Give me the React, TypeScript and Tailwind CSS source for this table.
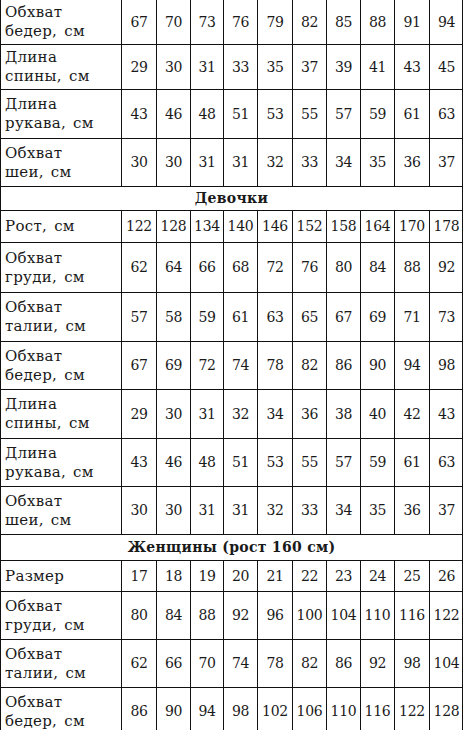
import React from "react";

type Row =
  | { kind: "data"; h: number; label: string[]; values: number[] }
  | { kind: "head"; h: number; title: string };

const rows: Row[] = [
  { kind: "data", h: 45, label: ["Обхват", "бедер, см"], values: [67, 70, 73, 76, 79, 82, 85, 88, 91, 94] },
  { kind: "data", h: 45, label: ["Длина", "спины, см"], values: [29, 30, 31, 33, 35, 37, 39, 41, 43, 45] },
  { kind: "data", h: 49, label: ["Длина", "рукава, см"], values: [43, 46, 48, 51, 53, 55, 57, 59, 61, 63] },
  { kind: "data", h: 48, label: ["Обхват", "шеи, см"], values: [30, 30, 31, 31, 32, 33, 34, 35, 36, 37] },
  { kind: "head", h: 24, title: "Девочки" },
  { kind: "data", h: 32, label: ["Рост, см"], values: [122, 128, 134, 140, 146, 152, 158, 164, 170, 178] },
  { kind: "data", h: 50, label: ["Обхват", "груди, см"], values: [62, 64, 66, 68, 72, 76, 80, 84, 88, 92] },
  { kind: "data", h: 49, label: ["Обхват", "талии, см"], values: [57, 58, 59, 61, 63, 65, 67, 69, 71, 73] },
  { kind: "data", h: 48, label: ["Обхват", "бедер, см"], values: [67, 69, 72, 74, 78, 82, 86, 90, 94, 98] },
  { kind: "data", h: 49, label: ["Длина", "спины, см"], values: [29, 30, 31, 32, 34, 36, 38, 40, 42, 43] },
  { kind: "data", h: 48, label: ["Длина", "рукава, см"], values: [43, 46, 48, 51, 53, 55, 57, 59, 61, 63] },
  { kind: "data", h: 48, label: ["Обхват", "шеи, см"], values: [30, 30, 31, 31, 32, 33, 34, 35, 36, 37] },
  { kind: "head", h: 26, title: "Женщины (рост 160 см)" },
  { kind: "data", h: 31, label: ["Размер"], values: [17, 18, 19, 20, 21, 22, 23, 24, 25, 26] },
  { kind: "data", h: 48, label: ["Обхват", "груди, см"], values: [80, 84, 88, 92, 96, 100, 104, 110, 116, 122] },
  { kind: "data", h: 48, label: ["Обхват", "талии, см"], values: [62, 66, 70, 74, 78, 82, 86, 92, 98, 104] },
  { kind: "data", h: 48, label: ["Обхват", "бедер, см"], values: [86, 90, 94, 98, 102, 106, 110, 116, 122, 128] },
];

const heights: Record<number, string> = {
  24: "h-[24px]",
  26: "h-[26px]",
  31: "h-[31px]",
  32: "h-[32px]",
  45: "h-[45px]",
  48: "h-[48px]",
  49: "h-[49px]",
  50: "h-[50px]",
};

export default function App() {
  return (
    <div className="w-[463px] h-[730px] overflow-hidden bg-white text-[#1a1a1a] font-['DejaVu_Serif',serif]">
      <div className="w-[463px] border-l border-r border-[#111]">
        {rows.map((r, i) =>
          r.kind === "head" ? (
            <div
              key={i}
              className={`${heights[r.h]} border-b border-[#111] flex items-center justify-center font-bold text-[14px] tracking-[0.3px]`}
            >
              {r.title}
            </div>
          ) : (
            <div
              key={i}
              className={`${heights[r.h]} border-b border-[#111] grid grid-cols-[121px_35px_34px_33px_34px_35px_34px_34px_34px_35px_33px]`}
            >
              <div className="border-r border-[#111] flex flex-col justify-center pl-[4px] text-[15px] leading-[19px] tracking-[0.3px] [word-spacing:2px]">
                {r.label.map((l, j) => (
                  <span key={j}>{l}</span>
                ))}
              </div>
              {r.values.map((v, j) => (
                <div
                  key={j}
                  className={`${j < 9 ? "border-r border-[#111]" : ""} flex items-center justify-center text-[14px] tracking-[-0.3px]`}
                >
                  {v}
                </div>
              ))}
            </div>
          )
        )}
      </div>
    </div>
  );
}
